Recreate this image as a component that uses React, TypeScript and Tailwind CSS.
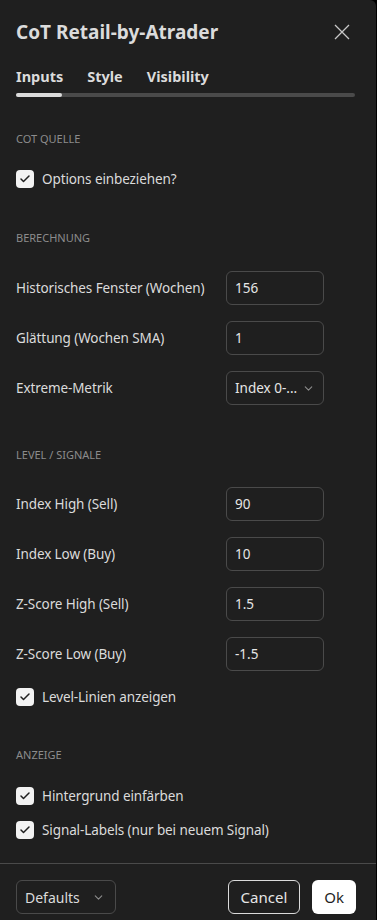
import { ChevronDown, Check } from "lucide-react";

const font = { fontFamily: '"Noto Sans", "Open Sans", sans-serif' };

function SectionTitle({ children, className = "" }: { children: string; className?: string }) {
  return <div className={`text-[11px] uppercase text-[#8c8c8c] leading-4 ${className}`}>{children}</div>;
}

function CheckRow({ label, className = "" }: { label: string; className?: string }) {
  return (
    <div className={`flex items-center h-[18px] ${className}`}>
      <div className="w-[18px] h-[18px] rounded-[4px] bg-[#f2f2f2] flex items-center justify-center">
        <Check size={12} strokeWidth={3} className="text-[#1f1f1f]" />
      </div>
      <span className="ml-[8px] text-[13.5px] tracking-[-0.1px] text-[#dbdbdb]">{label}</span>
    </div>
  );
}

function InputRow({ label, value, select }: { label: string; value: string; select?: boolean }) {
  return (
    <div className="flex items-center h-[34px]">
      <span className="w-[210px] text-[13.5px] tracking-[-0.1px] text-[#dbdbdb]">{label}</span>
      <div className="w-[98px] h-[34px] rounded-[6px] border border-[#4a4a4a] flex items-center pl-[8px] pr-[8px] text-[13.5px] text-[#e6e6e6]">
        <span className="flex-1">{value}</span>
        {select && <ChevronDown size={13} className="text-[#8c8c8c]" />}
      </div>
    </div>
  );
}

export default function App() {
  return (
    <div className="w-[377px] h-[920px] bg-black flex" style={font}>
      <div className="w-[376px] h-[920px] bg-[#1f1f1f] rounded-tr-[6px] flex flex-col">
        <div className="flex items-center justify-between pl-[16px] pr-[26px] h-[64px]">
          <h1 className="text-[19px] font-bold text-[#dbdbdb]">CoT Retail-by-Atrader</h1>
          <svg width="16" height="16" viewBox="0 0 16 16" className="text-[#c8c8c8]">
            <path d="M1 1 15 15M15 1 1 15" stroke="currentColor" strokeWidth="1.3" fill="none" />
          </svg>
        </div>

        <div className="px-[16px]">
          <div className="flex gap-[24px] text-[14.5px] font-bold text-[#dbdbdb] h-[26px] items-center">
            <span>Inputs</span>
            <span>Style</span>
            <span>Visibility</span>
          </div>
          <div className="mt-[3px] w-[339px] h-[4px] rounded-full bg-[#4a4a4a] flex">
            <div className="w-[46px] h-[4px] rounded-full bg-[#dbdbdb]" />
          </div>
        </div>

        <div className="flex-1 px-[16px] pt-[34px]">
          <SectionTitle>Cot Quelle</SectionTitle>
          <CheckRow label="Options einbeziehen?" className="mt-[23px]" />

          <SectionTitle className="mt-[42px]">Berechnung</SectionTitle>
          <div className="mt-[25px] flex flex-col gap-[16px]">
            <InputRow label="Historisches Fenster (Wochen)" value="156" />
            <InputRow label="Glättung (Wochen SMA)" value="1" />
            <InputRow label="Extreme-Metrik" value="Index 0-..." select />
          </div>

          <SectionTitle className="mt-[42px]">Level / Signale</SectionTitle>
          <div className="mt-[24px] flex flex-col gap-[16px]">
            <InputRow label="Index High (Sell)" value="90" />
            <InputRow label="Index Low (Buy)" value="10" />
            <InputRow label="Z-Score High (Sell)" value="1.5" />
            <InputRow label="Z-Score Low (Buy)" value="-1.5" />
          </div>
          <CheckRow label="Level-Linien anzeigen" className="mt-[17px]" />

          <SectionTitle className="mt-[41px]">Anzeige</SectionTitle>
          <CheckRow label="Hintergrund einfärben" className="mt-[24px]" />
          <CheckRow label="Signal-Labels (nur bei neuem Signal)" className="mt-[16px]" />
        </div>

        <div className="border-t border-[#4a4a4a] h-[57px] flex items-start pt-[16px] px-[16px] justify-between">
          <div className="w-[100px] h-[34px] rounded-[6px] border border-[#4a4a4a] flex items-center justify-between pl-[8px] pr-[10px] text-[14px] text-[#dbdbdb]">
            <span>Defaults</span>
            <ChevronDown size={13} className="text-[#8c8c8c]" />
          </div>
          <div className="flex gap-[12px] mr-[4px]">
            <button className="h-[34px] px-[12px] rounded-[6px] border border-[#dbdbdb] text-[15px] text-[#e6e6e6]">Cancel</button>
            <button className="h-[34px] px-[12px] rounded-[6px] bg-white text-[15px] text-[#1f1f1f]">Ok</button>
          </div>
        </div>
      </div>
    </div>
  );
}
